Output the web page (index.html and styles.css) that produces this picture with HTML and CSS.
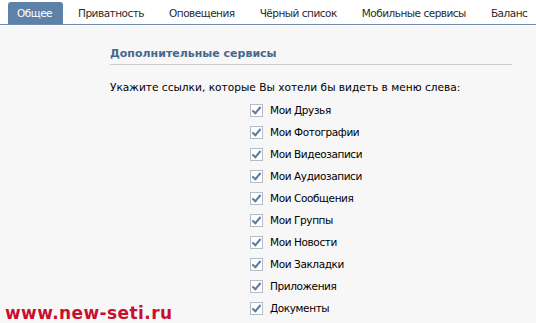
FILE: index.html
```html
<!DOCTYPE html>
<html lang="ru">
<head>
    <meta charset="UTF-8">
    <title>Настройки</title>
    <link rel="stylesheet" href="styles.css">
</head>
<body>
    <div class="tabs">
        <a class="tab active">Общее</a>
        <a class="tab">Приватность</a>
        <a class="tab">Оповещения</a>
        <a class="tab">Чёрный список</a>
        <a class="tab">Мобильные сервисы</a>
        <a class="tab">Баланс</a>
    </div>

    <div class="content">
        <h2 class="section-title">Дополнительные сервисы</h2>
        <p class="hint">Укажите ссылки, которые Вы хотели бы видеть в меню слева:</p>

        <div class="menu-list">
            <label class="item"><span class="check"></span>Мои Друзья</label>
            <label class="item"><span class="check"></span>Мои Фотографии</label>
            <label class="item"><span class="check"></span>Мои Видеозаписи</label>
            <label class="item"><span class="check"></span>Мои Аудиозаписи</label>
            <label class="item"><span class="check"></span>Мои Сообщения</label>
            <label class="item"><span class="check"></span>Мои Группы</label>
            <label class="item"><span class="check"></span>Мои Новости</label>
            <label class="item"><span class="check"></span>Мои Закладки</label>
            <label class="item"><span class="check"></span>Приложения</label>
            <label class="item"><span class="check"></span>Документы</label>
        </div>

        <div class="watermark">www.new-seti.ru</div>
    </div>
</body>
</html>
```

FILE: styles.css
```css
body {
    margin: 0;
    padding: 0;
    font-family: "DejaVu Sans", sans-serif;
    font-size: 11px;
    color: #000;
    background: #f7f7f7;
    width: 536px;
    height: 323px;
    overflow: hidden;
}

.tabs {
    display: flex;
    align-items: flex-end;
    height: 24px;
    padding-left: 8px;
    background: #fff;
    border-bottom: 1px solid #6f8cae;
    white-space: nowrap;
}

.tab {
    display: block;
    height: 22px;
    line-height: 23px;
    padding: 0 10px;
    margin-right: 5px;
    color: #2b2b2b;
    font-size: 10.5px;
    letter-spacing: -0.5px;
    border-radius: 3px 3px 0 0;
}

.tab.active {
    background: #5e81a8;
    color: #fff;
    padding: 0 11px 0 9px;
}

.content {
    position: relative;
    height: 298px;
    padding: 0 24px 0 110px;
    border-top: 1px solid #fff;
}

.section-title {
    margin: 0;
    padding-top: 21px;
    padding-bottom: 4px;
    font-size: 11px;
    font-weight: bold;
    color: #45688e;
    border-bottom: 1px solid #c8ccd2;
}

.hint {
    margin: 16px 0 6px;
    font-size: 10.6px;
}

.menu-list {
    display: flex;
    flex-direction: column;
    padding-left: 140px;
}

.item {
    display: flex;
    align-items: center;
    height: 22px;
    font-size: 10.5px;
    letter-spacing: -0.4px;
}

.check {
    width: 11px;
    height: 11px;
    margin-right: 7px;
    border: 1px solid #b5bcc6;
    background: #fff;
    position: relative;
}

.check::after {
    content: "";
    position: absolute;
    left: 3px;
    top: 0px;
    width: 3px;
    height: 7px;
    border: solid #5b7a9e;
    border-width: 0 2px 2px 0;
    transform: rotate(40deg);
}

.watermark {
    position: absolute;
    left: 5px;
    bottom: 1px;
    font-family: "DejaVu Sans", sans-serif;
    font-weight: bold;
    font-size: 17px;
    letter-spacing: 0.4px;
    color: #c8102e;
}
```
